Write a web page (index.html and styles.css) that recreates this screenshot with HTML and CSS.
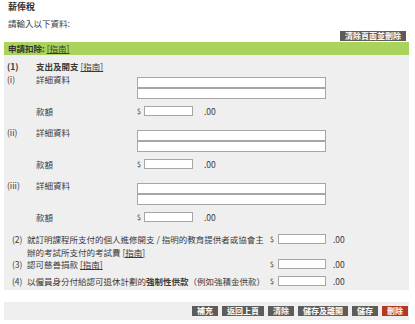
FILE: index.html
```html
<!DOCTYPE html>
<html>
  <head>
    <title>薪俸稅</title>
    <link rel="stylesheet" href="styles.css">
  </head>

  <body>
    <div id="page">
      <h1 class="title">薪俸稅</h1>
      <p class="intro">請輸入以下資料:</p>

      <div class="toolbar">
        <button class="btn" type="button">清除頁面並刪除</button>
      </div>

      <div class="section-bar">申請扣除: <a href="#">[指南]</a></div>

      <div class="panel">
        <div class="part-one">
          <div class="row head">
            <span class="num">(1)</span>
            <span class="label">支出及開支 <a href="#">[指南]</a></span>
          </div>

          <div class="row item">
            <span class="num">(i)</span>
            <span class="label">詳細資料</span>
            <div class="stack">
              <input type="text">
              <input type="text">
            </div>
          </div>
          <div class="row amount">
            <span class="num"></span>
            <span class="label">款額</span>
            <div class="money">
              <span class="dollar">$</span>
              <input type="text" class="amt">
              <span class="cents">.00</span>
            </div>
          </div>

          <div class="row item">
            <span class="num">(ii)</span>
            <span class="label">詳細資料</span>
            <div class="stack">
              <input type="text">
              <input type="text">
            </div>
          </div>
          <div class="row amount">
            <span class="num"></span>
            <span class="label">款額</span>
            <div class="money">
              <span class="dollar">$</span>
              <input type="text" class="amt">
              <span class="cents">.00</span>
            </div>
          </div>

          <div class="row item">
            <span class="num">(iii)</span>
            <span class="label">詳細資料</span>
            <div class="stack">
              <input type="text">
              <input type="text">
            </div>
          </div>
          <div class="row amount">
            <span class="num"></span>
            <span class="label">款額</span>
            <div class="money">
              <span class="dollar">$</span>
              <input type="text" class="amt">
              <span class="cents">.00</span>
            </div>
          </div>
        </div>

        <div class="part-two">
          <div class="line two-line">
            <span class="num">(2)</span>
            <span class="text">就訂明課程所支付的個人進修開支 / 指明的教育提供者或協會主<br>辦的考試所支付的考試費 <a href="#">[指南]</a></span>
            <div class="money">
              <span class="dollar">$</span>
              <input type="text" class="amt">
              <span class="cents">.00</span>
            </div>
          </div>
          <div class="line">
            <span class="num">(3)</span>
            <span class="text">認可慈善捐款 <a href="#">[指南]</a></span>
            <div class="money">
              <span class="dollar">$</span>
              <input type="text" class="amt">
              <span class="cents">.00</span>
            </div>
          </div>
          <div class="line">
            <span class="num">(4)</span>
            <span class="text">以僱員身分付給認可退休計劃的<b>強制性供款</b>（例如強積金供款）</span>
            <div class="money">
              <span class="dollar">$</span>
              <input type="text" class="amt">
              <span class="cents">.00</span>
            </div>
          </div>
        </div>
      </div>

      <div class="actions">
        <button class="btn" type="button">補充</button>
        <button class="btn" type="button">返回上頁</button>
        <button class="btn" type="button">清除</button>
        <button class="btn" type="button">儲存及離開</button>
        <button class="btn" type="button">儲存</button>
        <button class="btn danger" type="button">刪除</button>
      </div>
    </div>
  </body>
</html>
```

FILE: styles.css
```css
* {
  box-sizing: border-box;
}

body {
  margin: 0;
  background: #ffffff;
  color: #3a3a3a;
  font-family: 'Noto Sans CJK TC', 'Noto Sans', sans-serif;
  font-size: 8.5px;
}

a {
  color: #3a3a3a;
  text-decoration: underline;
}

#page {
  width: 405px;
  margin-left: 4px;
  padding-top: 1px;
}

.title {
  margin: 0;
  padding-left: 4px;
  font-size: 9px;
  line-height: 12px;
  font-weight: 700;
  color: #333;
}

.intro {
  margin: 4px 0 0;
  padding-left: 4px;
  line-height: 12px;
}

.toolbar {
  display: flex;
  justify-content: flex-end;
  margin-top: 2px;
  padding-right: 3px;
}

.btn {
  display: inline-flex;
  align-items: center;
  height: 10px;
  padding: 0 5px;
  border: none;
  background: #5c5c5c;
  color: #ffffff;
  font-family: inherit;
  font-size: 8px;
  font-weight: 700;
  line-height: 1;
  overflow: hidden;
  cursor: pointer;
}

.btn.danger {
  background: #b23a22;
}

.section-bar {
  margin-top: 1px;
  height: 13px;
  padding-left: 4px;
  background: #a9d35b;
  font-weight: 700;
  line-height: 13px;
  color: #333;
}

.section-bar a {
  font-weight: 400;
}

.panel {
  background: #efefef;
  padding: 5px 0 4px;
}

.part-one {
  padding-left: 3px;
}

.row {
  display: grid;
  grid-template-columns: 29px 101px 1fr;
}

.row .num,
.row .label {
  line-height: 12px;
}

.row.head {
  height: 12px;
  font-weight: 700;
}

.row.head a {
  font-weight: 400;
}

.row.item {
  margin-top: 1px;
}

.row.item + .row.amount {
  margin-top: 6px;
}

.row.amount + .row.item {
  margin-top: 9px;
}

.stack {
  padding-top: 4px;
}

.stack input {
  display: block;
  width: 189px;
  height: 11px;
  margin: 0;
  padding: 0;
  border: 1px solid #a6a6a6;
  background: #fff;
}

.row.amount {
  height: 12px;
  align-items: center;
}

.money {
  display: flex;
  align-items: center;
  height: 10px;
  line-height: 10px;
}

.dollar {
  width: 7px;
  font-size: 7px;
}

.amt {
  width: 49px;
  height: 10px;
  margin: 0;
  padding: 0;
  border: 1px solid #a6a6a6;
  background: #fff;
}

.cents {
  margin-left: 11px;
}

.part-two {
  margin-top: 10px;
  padding-left: 8px;
}

.line {
  display: grid;
  grid-template-columns: 15px 243px auto;
  align-items: start;
  line-height: 10px;
}

.line.two-line {
  line-height: 12.5px;
}

.line.two-line .money {
  margin-top: 1px;
}

.line + .line {
  margin-top: 1px;
}

.line:last-child {
  margin-top: 7px;
}

.line .dollar {
  width: 8px;
}

.line .amt {
  width: 48px;
}

.line .cents {
  margin-left: 7px;
}

.line b {
  font-weight: 700;
}

.actions {
  display: flex;
  justify-content: flex-end;
  gap: 4px;
  margin-top: 12px;
  padding: 4px 1px;
  background: #efefef;
}
```
